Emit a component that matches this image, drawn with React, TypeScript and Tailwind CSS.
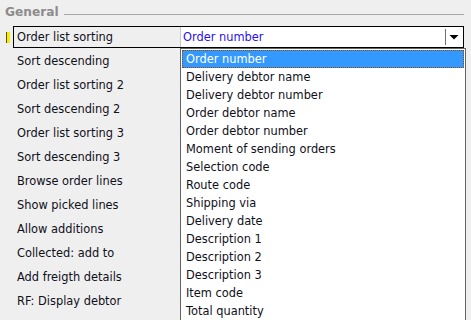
import React from "react";

const labels = [
  "Sort descending",
  "Order list sorting 2",
  "Sort descending 2",
  "Order list sorting 3",
  "Sort descending 3",
  "Browse order lines",
  "Show picked lines",
  "Allow additions",
  "Collected: add to",
  "Add freigth details",
  "RF: Display debtor",
];

const options = [
  "Order number",
  "Delivery debtor name",
  "Delivery debtor number",
  "Order debtor name",
  "Order debtor number",
  "Moment of sending orders",
  "Selection code",
  "Route code",
  "Shipping via",
  "Delivery date",
  "Description 1",
  "Description 2",
  "Description 3",
  "Item code",
  "Total quantity",
];

export default function App() {
  return (
    <div
      className="relative w-[471px] h-[320px] overflow-hidden bg-[#efefef] text-[11.4px] text-[#10101a]"
      style={{ fontFamily: "Tahoma, 'DejaVu Sans', Verdana, sans-serif" }}
    >
      <div className="flex items-center pl-[5px] pr-[7px] pt-[4px] h-[20px]">
        <span className="font-bold text-[#8c8c8c] text-[12.2px] leading-none">General</span>
        <div className="flex-1 ml-[5px] h-px bg-[#a8a8a8] mt-[4px]" />
      </div>
      <div className="flex items-center h-[22px] mt-[6px]">
        <div className="w-[13px] h-full flex items-center justify-start pl-[6px]">
          <div className="w-[4px] h-[11px] bg-[#f0f000] border-l border-[#605000]" />
        </div>
        <div className="flex flex-1 h-full border border-black mr-[7px]">
          <div className="w-[167px] flex items-center pl-[3px] pt-px border-r border-[#c8c8c8]">Order list sorting</div>
          <div className="flex-1 bg-white flex items-center pl-[2px] pt-px text-[#2a10f0]">Order number</div>
          <div className="w-[18px] bg-white flex items-center">
            <div className="w-px h-[16px] bg-[#707070]" />
            <svg width="17" height="20" viewBox="0 0 17 20">
              <path d="M3.5 8 L12.5 8 L8 12.5 Z" fill="#000" />
            </svg>
          </div>
        </div>
      </div>
      <div className="flex flex-col pl-[17px] pt-[2px]">
        {labels.map((l) => (
          <div key={l} className="h-[24px] flex items-center">
            {l}
          </div>
        ))}
      </div>
      <div className="absolute left-[180px] top-[48px] w-[286px] h-[290px] bg-white border border-[#646464] pt-px px-px">
        {options.map((o, i) => (
          <div
            key={o}
            className={
              i === 0
                ? "h-[18px] flex items-center pl-[3px] pt-px bg-[#3399ff] text-white border border-dotted border-[#8a4a10]"
                : "h-[18px] flex items-center pl-[4px] pt-px"
            }
          >
            {o}
          </div>
        ))}
      </div>
    </div>
  );
}
